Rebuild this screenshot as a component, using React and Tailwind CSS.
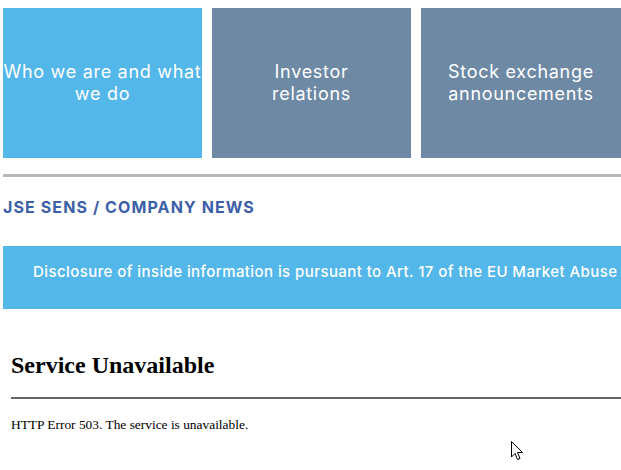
import React from "react";

const mont = { fontFamily: "Inter, 'Open Sans', sans-serif" };

export default function App() {
  return (
    <div className="relative w-[621px] h-[470px] overflow-hidden bg-white">
      <div className="pl-[3px] pt-[8px] w-[640px]">
        <div className="flex gap-[10px]">
          <div className="w-[199px] h-[150px] shrink-0 bg-[#54b7ea] flex items-center justify-center text-center text-white text-[18px] leading-[22px] tracking-[0.7px]" style={mont}>
            Who we are and what we do
          </div>
          <div className="w-[199px] h-[150px] shrink-0 bg-[#6d89a4] flex items-center justify-center text-center text-white text-[18px] leading-[22px] tracking-[0.7px] px-[50px]" style={mont}>
            Investor relations
          </div>
          <div className="w-[200px] h-[150px] shrink-0 bg-[#6d89a4] flex items-center justify-center text-center text-white text-[18px] leading-[22px] tracking-[0.7px] px-[8px]" style={mont}>
            Stock exchange announcements
          </div>
        </div>
        <div className="mt-[16px] h-[3px] w-[618px] bg-[#bbb8b3]" />
        <div className="mt-[20px] text-[16px] font-bold text-[#3c60a8] leading-[20px] tracking-[1.1px]" style={mont}>
          JSE SENS / COMPANY NEWS
        </div>
        <div className="mt-[29px] h-[63px] w-[618px] bg-[#54b7ea] pl-[30px] pt-[16px] overflow-hidden whitespace-nowrap text-white text-[15px] font-medium leading-[20px] tracking-[0.42px]" style={mont}>
          Disclosure of inside information is pursuant to Art. 17 of the EU Market Abuse
        </div>
      </div>
      <div className="pl-[11px] pt-[42px]" style={{ fontFamily: "'Liberation Serif', serif" }}>
        <div className="text-[24px] font-bold leading-[28px] text-black">Service Unavailable</div>
        <div className="mt-[18px] h-[2px] bg-[#666]" />
        <div className="mt-[18px] text-[13.4px] leading-[16px] text-black">HTTP Error 503. The service is unavailable.</div>
      </div>
      <svg className="absolute left-[511px] top-[441px]" width="13" height="20" viewBox="0 0 13 20">
        <path d="M0.5 0.5 L0.5 16 L4 12.5 L6.5 18.5 L9 17.5 L6.5 11.5 L11.5 11.5 Z" fill="white" stroke="black" strokeWidth="1" strokeLinejoin="miter" />
      </svg>
    </div>
  );
}
